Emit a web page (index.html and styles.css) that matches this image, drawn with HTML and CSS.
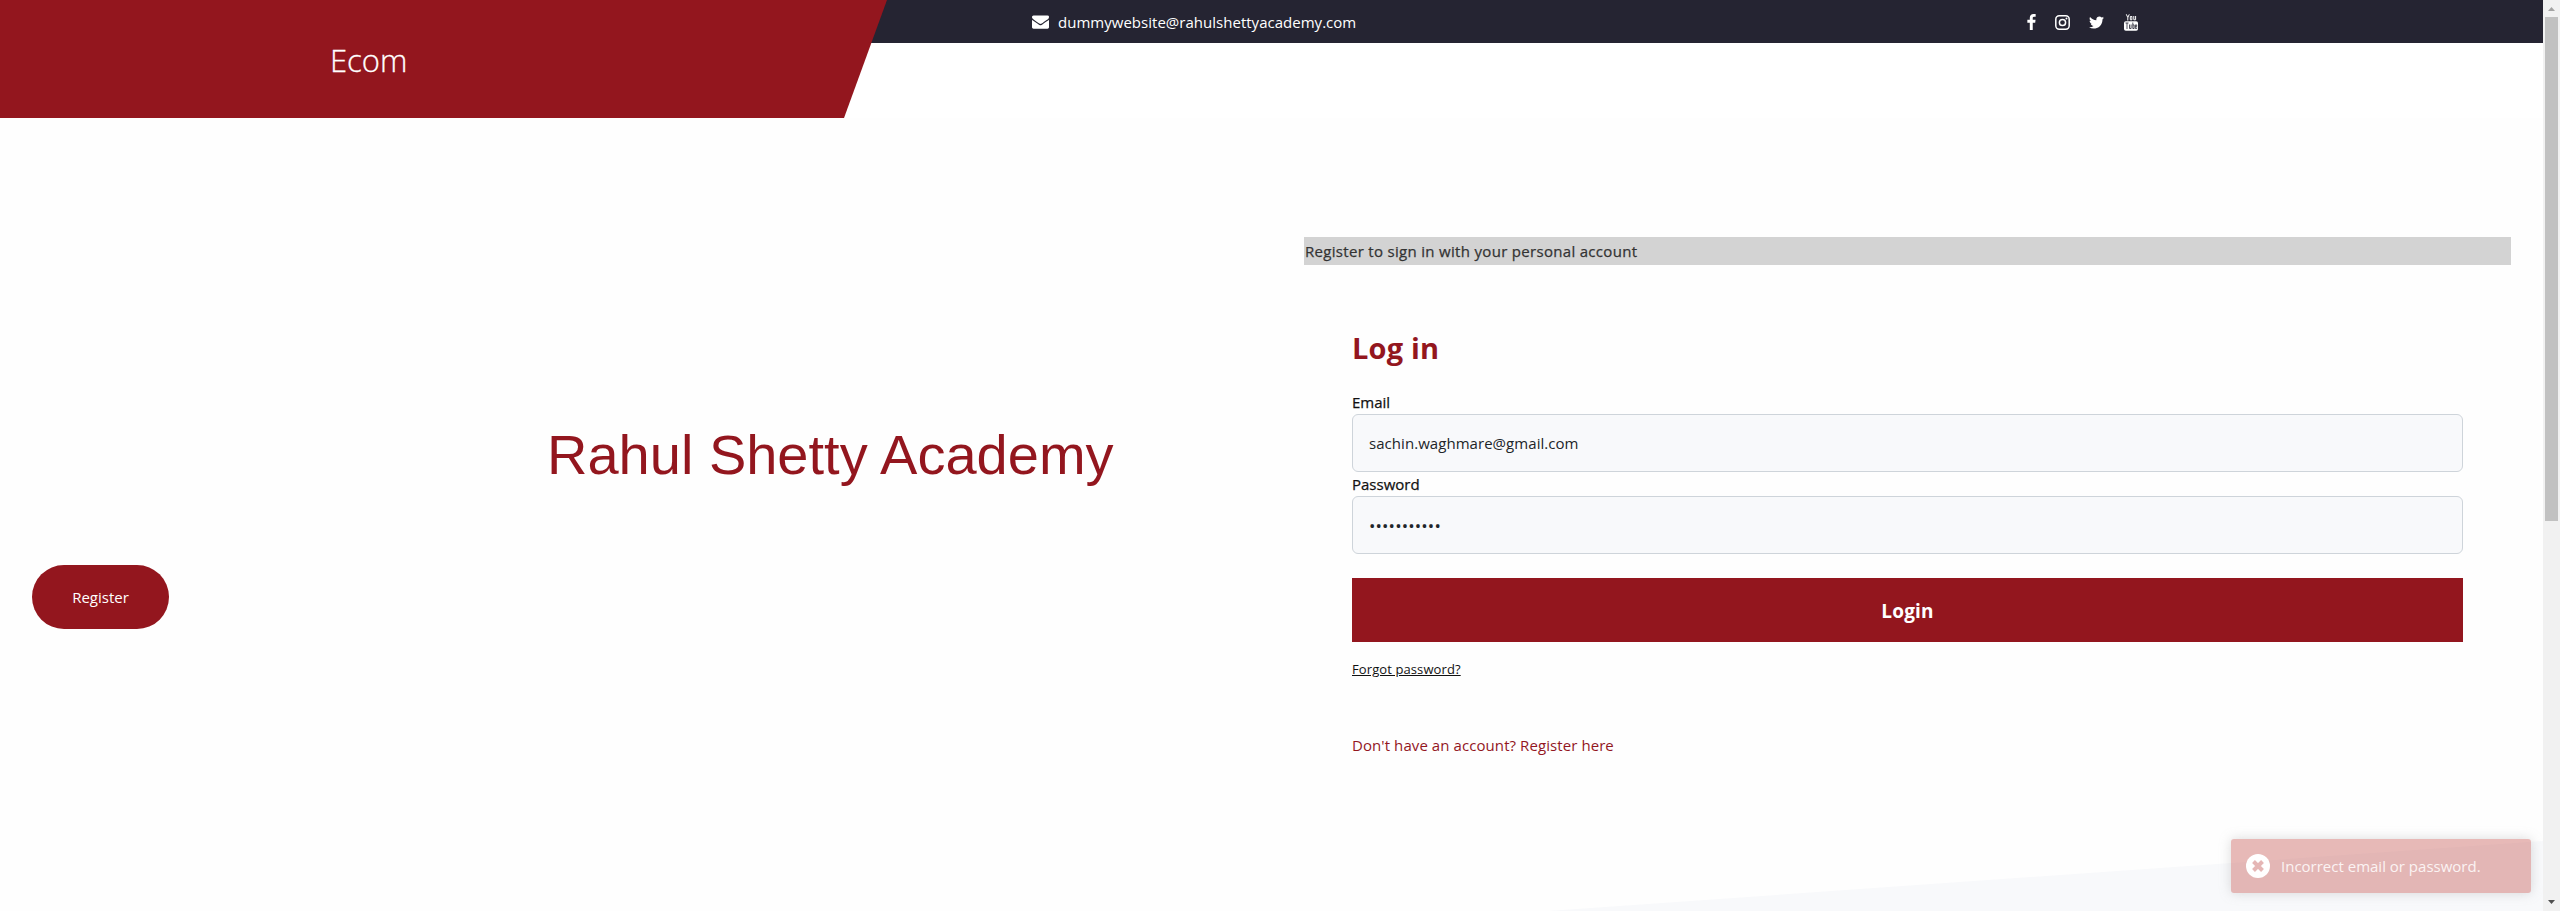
FILE: index.html
```html
<!DOCTYPE html>
<html lang="en">
<head>
<meta charset="utf-8">
<title>Ecom</title>
<link rel="stylesheet" href="styles.css">
</head>
<body>
<div class="window">
  <div class="page">
    <header class="header">
      <div class="topbar">
        <div class="contact">
          <svg class="mail" viewBox="0 0 1792 1792"><path d="M1792 710v794q0 66-47 113t-113 47h-1472q-66 0-113-47t-47-113v-794q44 49 101 87 362 246 497 345 57 42 92.500 65.500t94.500 48 110 24.500h2q51 0 110-24.500t94.500-48 92.500-65.500q170-123 498-345 57-39 100-87zm0-294q0 79-49 151t-122 123q-376 261-468 325-10 7-42.500 31t-54 38.500-52 32.500-57.500 27-50 9h-2q-23 0-50-9t-57.500-27-52-32.500-54-38.500-42.500-31q-91-64-262-182.500t-205-142.500q-62-42-117-115.500t-55-136.500q0-78 41.500-130t118.500-52h1472q65 0 112.500 47t47.500 113z"/></svg>
          <span class="mail-text">dummywebsite@rahulshettyacademy.com</span>
        </div>
        <div class="social">
          <svg class="fb" viewBox="479 0 864 1664"><path d="M1343 12v264h-157q-86 0-116 36t-30 108v189h293l-39 296h-254v759h-306v-759h-255v-296h255v-218q0-186 104-288.500t277-102.500q147 0 228 12z"/></svg>
          <svg class="ig" viewBox="0 0 15 15"><rect x=".8" y=".8" width="13.400" height="13.400" rx="3.400" fill="none" stroke="#fff" stroke-width="1.500"/><circle cx="7.500" cy="7.500" r="3.100" fill="none" stroke="#fff" stroke-width="1.500"/><circle cx="11.500" cy="3.500" r="1"/></svg>
          <svg class="tw" viewBox="108 256 1576 1280"><path d="M1684 408q-67 98-162 167 1 14 1 42 0 130-38 259.500t-115.500 248.500-184.500 210.500-258 146-323 54.500q-271 0-496-145 35 4 78 4 225 0 401-138-105-2-188-64.500t-114-159.500q33 5 61 5 43 0 85-11-112-23-185.500-111.500t-73.500-205.500v-4q68 38 146 41-66-44-105-115t-39-154q0-88 44-163 121 149 294.500 238.500t371.500 99.500q-8-38-8-74 0-134 94.500-228.500t228.500-94.500q140 0 236 102 109-21 205-78-37 115-142 178 93-10 186-50z"/></svg>
          <svg class="yt" viewBox="0 0 14 17"><path d="M2.300.3l1.500 3.200L5.300.3M3.800 3.500v3M7.900 2.300v3.600M7.900 2.500h-1.600v3.300h1.600M9.800 2v3.800h1.800V2" fill="none" stroke="#fff" stroke-width="1"/><rect x="0" y="7.300" width="14" height="9.400" rx="1.800"/><path d="M1.500 9h3M3 9v6M5.500 10.500v4h1.600v-4M8.800 8.500v6h1.300v-3.600H8.800M12.700 13.500v1h-1.300v-3.600h1.300v1.600h-1.300" fill="none" stroke="#252432" stroke-width=".8"/></svg>
        </div>
      </div>
      <div class="brand"><span class="brand-name">Ecom</span></div>
    </header>
    <main class="main">
      <section class="intro">
        <h1 class="academy">Rahul Shetty Academy</h1>
        <button class="register">Register</button>
      </section>
      <section class="account">
        <p class="notice">Register to sign in with your personal account</p>
        <form class="form">
          <h2 class="title">Log in</h2>
          <label class="label" for="email">Email</label>
          <input class="input email" id="email" type="text" value="sachin.waghmare@gmail.com">
          <label class="label pw" for="password">Password</label>
          <input class="input dots" id="password" type="password" value="password123">
          <button class="login" type="button">Login</button>
          <a class="forgot">Forgot password?</a>
          <a class="signup">Don't have an account? Register here</a>
        </form>
      </section>
    </main>
    <div class="slope"></div>
    <div class="toast">
      <svg class="toast-icon" viewBox="0 0 24 24"><circle cx="12" cy="12" r="12"/><path d="M7.500 7.500l9 9M16.500 7.500l-9 9" fill="none" stroke="#e5b6b5" stroke-width="4"/></svg>
      <span class="toast-text">Incorrect email or password.</span>
    </div>
  </div>
  <div class="scrollbar">
    <svg class="arrow" viewBox="0 0 17 17"><path d="M5 11h7L8.500 7z" fill="#a3a3a3"/></svg>
    <div class="thumb"></div>
    <svg class="arrow end" viewBox="0 0 17 17"><path d="M5 6h7L8.500 10z" fill="#505050"/></svg>
  </div>
</div>
</body>
</html>
```
FILE: styles.css
```css
* { box-sizing: border-box; }
body { margin: 0; background: #fff; font-family: "Open Sans", "Noto Sans", sans-serif; font-size: 15px; color: #212529; overflow: hidden; }
svg { display: block; fill: #fff; flex: none; }
h1, h2, p { margin: 0; font-weight: 400; }
button { border: 0; color: #fff; font-family: inherit; background: #93161e; }
.window { display: flex; height: 911px; }
.page { position: relative; flex: 1; overflow: hidden; display: flex; flex-direction: column; }
.header { position: relative; height: 118px; flex: none; }
.topbar { height: 43px; background: #252432; display: flex; align-items: center; padding: 0 405px 0 1032px; justify-content: space-between; color: #fff; }
.contact { display: flex; align-items: center; gap: 9px; }
.mail { width: 17px; height: 17px; }
.mail-text { letter-spacing: .02px; white-space: nowrap; }
.social { display: flex; align-items: center; padding-top: 1px; }
.fb { width: 9px; height: 16px; margin-right: 19px; }
.ig { width: 15px; height: 15px; margin-right: 19px; }
.tw { width: 15px; height: 13px; margin-right: 20px; }
.yt { width: 14px; height: 17px; }
.brand { position: absolute; left: 0; top: 0; width: 887px; height: 118px; background: #93161e; clip-path: polygon(0 0, 100% 0, 844px 100%, 0 100%); color: #fff; padding: 39px 0 0 330px; }
.brand-name { font-size: 31px; line-height: 42px; font-weight: 300; display: inline-block; -webkit-text-stroke: .3px #fff; }
.main { display: grid; grid-template-columns: 1272px 1207px; column-gap: 32px; flex: 1; background: #fefefe; }
.intro { display: flex; flex-direction: column; align-items: flex-start; padding: 305px 0 0 32px; }
.academy { font: 56px/64px "Liberation Sans", Arial, sans-serif; color: #93161e; margin-left: 515px; white-space: nowrap; }
.register { margin-top: 78px; width: 137px; height: 64px; border-radius: 32px; font-size: 15px; }
.account { padding-top: 119px; }
.notice { height: 28px; background: #d3d3d3; line-height: 28px; padding-left: 1px; font-weight: 500; color: #333; letter-spacing: .31px; -webkit-text-stroke: .25px #333; }
.form { padding: 59px 48px 0; display: flex; flex-direction: column; align-items: flex-start; }
.title { font-size: 29px; line-height: 48px; font-weight: 700; color: #93161e; letter-spacing: .2px; }
.label { color: #111; font-weight: 500; line-height: 24px; margin-top: 18px; -webkit-text-stroke: .25px #111; }
.label.pw { margin-top: 0; }
.input { width: 100%; height: 58px; border: 1px solid #ced4da; border-radius: 6px; background: #f8f9fb; padding: 0 16px; font: 15px "Open Sans", sans-serif; color: #212529; letter-spacing: .05px; }
.input.dots { font-size: 17px; letter-spacing: .15px; }
.login { width: 100%; height: 64px; margin-top: 24px; padding-top: 2px; font-size: 19px; font-weight: 700; letter-spacing: .2px; }
.forgot { margin-top: 17px; font-size: 13px; line-height: 20px; color: #111; text-decoration: underline; letter-spacing: .1px; }
.signup { margin-top: 54px; line-height: 24px; color: #93161e; letter-spacing: .08px; }
.slope { position: absolute; left: 1548px; right: 0; bottom: 0; height: 70px; background: #f8f9fb; clip-path: polygon(0 100%, 100% 0, 100% 100%); }
.toast { position: absolute; left: 2231px; top: 839px; width: 300px; height: 54px; border-radius: 3px; background: rgba(189, 54, 47, .34); box-shadow: 0 0 12px rgba(153, 153, 153, .35); color: #fbf3f3; display: flex; align-items: center; padding-left: 15px; gap: 11px; }
.toast-icon { width: 24px; height: 24px; }
.scrollbar { width: 17px; background: #f1f1f1; display: flex; flex-direction: column; align-items: center; }
.arrow { width: 17px; height: 17px; }
.end { margin-top: auto; }
.thumb { width: 13px; height: 504px; background: #c1c1c1; }
```
